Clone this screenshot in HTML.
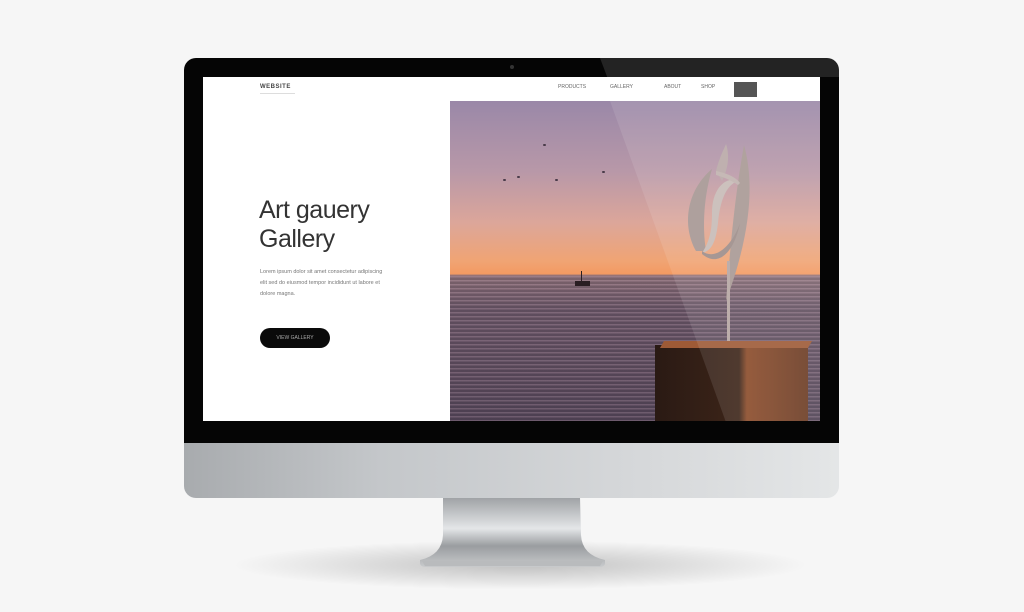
<!DOCTYPE html>
<html><head><style>
*{margin:0;padding:0;box-sizing:border-box}
body{width:1024px;height:612px;background:#f6f6f6;position:relative;overflow:hidden;font-family:"Liberation Sans",sans-serif}
.a{position:absolute}
.b{position:absolute;width:3px;height:2px;background:#4a3c4a;border-radius:1px}
</style></head><body>
<div class="a" style="left:230px;top:540px;width:580px;height:50px;border-radius:50%;background:radial-gradient(ellipse at center,rgba(0,0,0,.22),rgba(0,0,0,0) 70%)"></div>
<svg class="a" style="left:410px;top:495px" width="205" height="75" viewBox="0 0 205 75">
<defs><linearGradient id="s" x1="0" y1="0" x2="0" y2="1"><stop offset="0" stop-color="#9ea1a4"/><stop offset=".45" stop-color="#e4e6e8"/><stop offset=".7" stop-color="#9a9da0"/><stop offset="1" stop-color="#c8cacc"/></linearGradient></defs>
<path d="M33 2 H170 L171 40 Q172 60 195 65 L195 68 Q195 72 188 72 H17 Q10 72 10 68 L10 65 Q32 60 33 40 Z" fill="url(#s)"/>
<path d="M12 66 H193 L190 71 H15Z" fill="#b9bbbd"/>
</svg>
<div class="a" style="left:184px;top:440px;width:655px;height:58px;border-radius:0 0 12px 12px;background:linear-gradient(90deg,#a8abae,#c4c7ca 30%,#d6d8da 70%,#e4e6e7)"></div>
<div class="a" style="left:184px;top:58px;width:655px;height:385px;border-radius:12px 12px 0 0;background:#050505"></div>
<div class="a" style="left:510px;top:65px;width:4px;height:4px;border-radius:50%;background:#333"></div>
<div class="a" style="left:203px;top:77px;width:617px;height:344px;background:#fff;overflow:hidden">
 <div class="a" style="left:57px;top:7px;font-size:6px;color:#444;font-weight:bold;letter-spacing:.5px">WEBSITE</div>
 <div class="a" style="left:57px;top:16px;width:35px;height:1px;background:#ddd"></div>
 <div class="a" style="left:355px;top:7px;font-size:5px;color:#666">PRODUCTS</div>
 <div class="a" style="left:407px;top:7px;font-size:5px;color:#666">GALLERY</div>
 <div class="a" style="left:461px;top:7px;font-size:5px;color:#666">ABOUT</div>
 <div class="a" style="left:498px;top:7px;font-size:5px;color:#666">SHOP</div>
 <div class="a" style="left:531px;top:5px;width:23px;height:15px;background:#555"></div>
 <div class="a" style="left:56px;top:119px;font-size:25px;color:#333;line-height:29px;letter-spacing:-.5px">Art gauery<br>Gallery</div>
 <div class="a" style="left:57px;top:190px;width:130px;font-size:5.5px;line-height:11px;color:#777">Lorem ipsum dolor sit amet consectetur adipiscing elit sed do eiusmod tempor incididunt ut labore et dolore magna.</div>
 <div class="a" style="left:57px;top:251px;width:70px;height:20px;border-radius:10px;background:#0a0a0a;color:#aaa;font-size:5px;line-height:20px;text-align:center">VIEW GALLERY</div>
 <div class="a" style="left:247px;top:24px;width:370px;height:320px;overflow:hidden;background:linear-gradient(180deg,#9a88a8 0%,#b898a8 22%,#dca69a 38%,#f0a474 50%,#f39a62 54%,#8a6e78 54.6%,#6a5668 65%,#55465a 100%)">
  <div class="a" style="left:0;top:175px;width:370px;height:145px;background:repeating-linear-gradient(180deg,rgba(255,215,225,.14) 0 1px,rgba(0,0,0,.1) 2px 4px)"></div>
  <div class="a" style="left:125px;top:180px;width:15px;height:5px;background:#2a1e22"></div>
  <div class="a" style="left:131px;top:170px;width:1px;height:10px;background:#2a1e22"></div>
  <div class="b" style="left:93px;top:43px"></div>
  <div class="b" style="left:53px;top:78px"></div>
  <div class="b" style="left:67px;top:75px"></div>
  <div class="b" style="left:105px;top:78px"></div>
  <div class="b" style="left:152px;top:70px"></div>
  <svg class="a" style="left:230px;top:40px" width="80" height="210" viewBox="0 0 80 210">
   <path d="M16 110 C2 85 6 50 32 28 C24 55 22 85 26 110Z" fill="#a59692"/>
   <path d="M36 30 C40 15 44 8 46 3 C50 15 48 28 42 40Z" fill="#b8a8a6"/>
   <path d="M64 4 C74 40 72 90 46 160 C50 110 54 60 64 4Z" fill="#a89894"/>
   <path d="M32 72 C32 45 48 35 58 40 C46 44 40 60 38 82 C36 100 32 110 22 112 C30 100 32 88 32 72Z" fill="#c7bab6"/>
   <path d="M22 110 C38 122 55 98 60 82 C55 108 40 128 22 113Z" fill="#9c8c88"/>
   <path d="M36 30 C46 32 56 36 60 42 L58 44 C52 40 44 36 36 34Z" fill="#c0b2ae"/>
   <rect x="47" y="120" width="3" height="90" fill="#b5a5a2"/>
  </svg>
  <div class="a" style="left:205px;top:244px;width:153px;height:76px;background:linear-gradient(90deg,#2a1a14,#3c2418 55%,#8a4a28 60%,#6a3a22)"></div>
  <div class="a" style="left:212px;top:240px;width:148px;height:7px;background:#9e5a36;transform:skewX(-30deg)"></div>
  <div class="a" style="left:160px;top:0;width:210px;height:320px;background:rgba(255,255,255,.1);clip-path:polygon(0 0,100% 0,100% 100%,55% 100%)"></div>
 </div>
</div>
<div class="a" style="left:600px;top:58px;width:239px;height:19px;background:rgba(255,255,255,.12);clip-path:polygon(0 0,100% 0,100% 100%,3% 100%)"></div>
</body></html>
